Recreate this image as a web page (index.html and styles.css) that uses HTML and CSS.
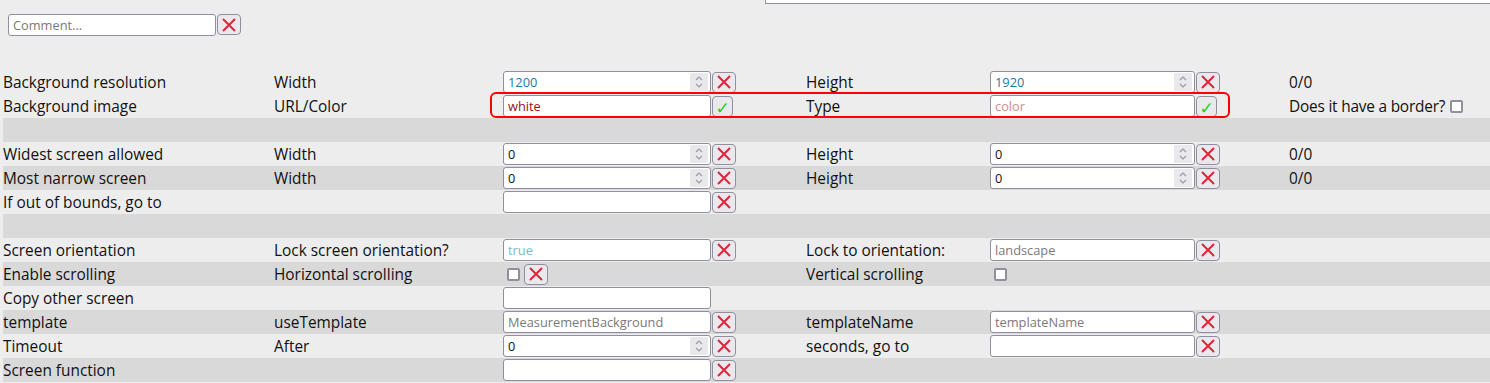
FILE: index.html
```html
<!DOCTYPE html>
<html lang="en">
<head>
    <meta charset="UTF-8">
    <title>Screen settings</title>
    <link rel="stylesheet" href="styles.css">
</head>
<body>
    <div class="notes"></div>

    <div class="comment-bar">
        <input type="text" class="field comment" placeholder="Comment...">
        <button class="btn-x"><svg viewBox="0 0 14 14"><path d="M1 1L13 13M13 1L1 13"/></svg></button>
    </div>

    <div class="settings">
        <div class="row light">
            <div>Background resolution</div>
            <div>Width</div>
            <div class="cell">
                <div class="field num"><input type="text" class="val-blue" value="1200"><span class="spin"><svg viewBox="0 0 10 14"><path d="M2 5L5 2L8 5M2 9L5 12L8 9"/></svg></span></div>
                <button class="btn-x"><svg viewBox="0 0 14 14"><path d="M1 1L13 13M13 1L1 13"/></svg></button>
            </div>
            <div>Height</div>
            <div class="cell">
                <div class="field num wide2"><input type="text" class="val-blue" value="1920"><span class="spin"><svg viewBox="0 0 10 14"><path d="M2 5L5 2L8 5M2 9L5 12L8 9"/></svg></span></div>
                <button class="btn-x"><svg viewBox="0 0 14 14"><path d="M1 1L13 13M13 1L1 13"/></svg></button>
            </div>
            <div>0/0</div>
        </div>

        <div class="row light">
            <div class="highlight"></div>
            <div>Background image</div>
            <div>URL/Color</div>
            <div class="cell">
                <input type="text" class="field val-red" value="white">
                <button class="btn-ok">✓</button>
            </div>
            <div>Type</div>
            <div class="cell">
                <input type="text" class="field wide2 ph-red" placeholder="color">
                <button class="btn-ok">✓</button>
            </div>
            <div class="cell border-q">Does it have a border?<span class="check"></span></div>
        </div>

        <div class="row dark"></div>

        <div class="row light">
            <div>Widest screen allowed</div>
            <div>Width</div>
            <div class="cell">
                <div class="field num"><input type="text" value="0"><span class="spin"><svg viewBox="0 0 10 14"><path d="M2 5L5 2L8 5M2 9L5 12L8 9"/></svg></span></div>
                <button class="btn-x"><svg viewBox="0 0 14 14"><path d="M1 1L13 13M13 1L1 13"/></svg></button>
            </div>
            <div>Height</div>
            <div class="cell">
                <div class="field num wide2"><input type="text" value="0"><span class="spin"><svg viewBox="0 0 10 14"><path d="M2 5L5 2L8 5M2 9L5 12L8 9"/></svg></span></div>
                <button class="btn-x"><svg viewBox="0 0 14 14"><path d="M1 1L13 13M13 1L1 13"/></svg></button>
            </div>
            <div>0/0</div>
        </div>

        <div class="row dark">
            <div>Most narrow screen</div>
            <div>Width</div>
            <div class="cell">
                <div class="field num"><input type="text" value="0"><span class="spin"><svg viewBox="0 0 10 14"><path d="M2 5L5 2L8 5M2 9L5 12L8 9"/></svg></span></div>
                <button class="btn-x"><svg viewBox="0 0 14 14"><path d="M1 1L13 13M13 1L1 13"/></svg></button>
            </div>
            <div>Height</div>
            <div class="cell">
                <div class="field num wide2"><input type="text" value="0"><span class="spin"><svg viewBox="0 0 10 14"><path d="M2 5L5 2L8 5M2 9L5 12L8 9"/></svg></span></div>
                <button class="btn-x"><svg viewBox="0 0 14 14"><path d="M1 1L13 13M13 1L1 13"/></svg></button>
            </div>
            <div>0/0</div>
        </div>

        <div class="row light">
            <div>If out of bounds, go to</div>
            <div></div>
            <div class="cell">
                <input type="text" class="field">
                <button class="btn-x"><svg viewBox="0 0 14 14"><path d="M1 1L13 13M13 1L1 13"/></svg></button>
            </div>
        </div>

        <div class="row dark"></div>

        <div class="row light">
            <div>Screen orientation</div>
            <div>Lock screen orientation?</div>
            <div class="cell">
                <input type="text" class="field ph-blue" placeholder="true">
                <button class="btn-x"><svg viewBox="0 0 14 14"><path d="M1 1L13 13M13 1L1 13"/></svg></button>
            </div>
            <div>Lock to orientation:</div>
            <div class="cell">
                <input type="text" class="field wide2" placeholder="landscape">
                <button class="btn-x"><svg viewBox="0 0 14 14"><path d="M1 1L13 13M13 1L1 13"/></svg></button>
            </div>
        </div>

        <div class="row dark">
            <div>Enable scrolling</div>
            <div>Horizontal scrolling</div>
            <div class="cell">
                <span class="check"></span>
                <button class="btn-x"><svg viewBox="0 0 14 14"><path d="M1 1L13 13M13 1L1 13"/></svg></button>
            </div>
            <div>Vertical scrolling</div>
            <div class="cell"><span class="check"></span></div>
        </div>

        <div class="row light">
            <div>Copy other screen</div>
            <div></div>
            <div class="cell"><input type="text" class="field"></div>
        </div>

        <div class="row dark">
            <div>template</div>
            <div>useTemplate</div>
            <div class="cell">
                <input type="text" class="field" placeholder="MeasurementBackground">
                <button class="btn-x"><svg viewBox="0 0 14 14"><path d="M1 1L13 13M13 1L1 13"/></svg></button>
            </div>
            <div>templateName</div>
            <div class="cell">
                <input type="text" class="field wide2" placeholder="templateName">
                <button class="btn-x"><svg viewBox="0 0 14 14"><path d="M1 1L13 13M13 1L1 13"/></svg></button>
            </div>
        </div>

        <div class="row light">
            <div>Timeout</div>
            <div>After</div>
            <div class="cell">
                <div class="field num"><input type="text" value="0"><span class="spin"><svg viewBox="0 0 10 14"><path d="M2 5L5 2L8 5M2 9L5 12L8 9"/></svg></span></div>
                <button class="btn-x"><svg viewBox="0 0 14 14"><path d="M1 1L13 13M13 1L1 13"/></svg></button>
            </div>
            <div>seconds, go to</div>
            <div class="cell">
                <input type="text" class="field wide2">
                <button class="btn-x"><svg viewBox="0 0 14 14"><path d="M1 1L13 13M13 1L1 13"/></svg></button>
            </div>
        </div>

        <div class="row dark">
            <div>Screen function</div>
            <div></div>
            <div class="cell">
                <input type="text" class="field">
                <button class="btn-x"><svg viewBox="0 0 14 14"><path d="M1 1L13 13M13 1L1 13"/></svg></button>
            </div>
        </div>
    </div>
</body>
</html>
```

FILE: styles.css
```css
body {
    margin: 0;
    background-color: #ededed;
    font-family: "Open Sans", "Noto Sans", sans-serif;
    font-size: 15.4px;
    color: #111;
    overflow: hidden;
}
/* leftover of the notes box above, scrolled out of view */
.notes {
    margin-left: 765px;
    height: 3px;
    border-left: 1px solid #8f8f9d;
    border-bottom: 1px solid #8f8f9d;
    background-color: #fff;
}
.comment-bar {
    display: flex;
    gap: 1px;
    margin: 10px 0 0 8px;
}
.settings {
    margin-top: 34px;
    margin-left: 3px;
}
.row {
    position: relative;
    display: grid;
    grid-template-columns: 271px 229px 303px 184px 299px 1fr;
    grid-template-rows: 24px;
    height: 24px;
    line-height: 25px;
    white-space: nowrap;
}
.light {
    background-color: #ededed;
}
.dark {
    background-color: #d9d9d9;
}
.cell {
    display: flex;
    align-items: center;
    gap: 1px;
    height: 24px;
}
.border-q {
    letter-spacing: -0.2px;
}
.field {
    box-sizing: border-box;
    width: 208px;
    height: 22px;
    border: 1px solid #8f8f9d;
    border-radius: 3px;
    background-color: #fff;
    font-family: "Open Sans", "Noto Sans", sans-serif;
    font-size: 12.8px;
    letter-spacing: 0;
    padding: 0 4px;
    color: #111;
    outline: none;
}
.field.wide2 {
    width: 205px;
}
.comment {
    width: 208px;
}
.field::placeholder {
    color: #7a7a7a;
}
.num {
    display: flex;
    align-items: center;
    padding: 0 2px 0 4px;
}
.num input {
    flex: 1;
    min-width: 0;
    border: none;
    padding: 0;
    background: transparent;
    font: inherit;
    color: #111;
    outline: none;
}
.spin {
    width: 18px;
    height: 18px;
    background-color: #e9e9ed;
    display: flex;
    align-items: center;
    justify-content: center;
}
.spin svg {
    width: 10px;
    height: 14px;
    fill: none;
    stroke: #9a9aa6;
    stroke-width: 1.2;
}
.val-blue {
    color: #1b7ba8 !important;
}
.val-red {
    color: #9b1111;
}
.ph-red::placeholder {
    color: #d58a8a;
}
.ph-blue::placeholder {
    color: #7ab8d2;
}
.btn-x, .btn-ok {
    box-sizing: border-box;
    width: 24px;
    height: 21px;
    padding: 0;
    border: 1px solid #8f8f9d;
    border-radius: 4px;
    background-color: #e9e9ed;
    display: flex;
    align-items: center;
    justify-content: center;
}
.btn-x svg {
    width: 14px;
    height: 14px;
    fill: none;
    stroke: #e0243c;
    stroke-width: 2;
}
.btn-ok {
    width: 21px;
    padding-top: 3px;
    color: #22d022;
    font-size: 17px;
    font-family: "DejaVu Sans", sans-serif;
}
.check {
    box-sizing: border-box;
    display: inline-block;
    width: 13px;
    height: 13px;
    margin: 0 3px 0 4px;
    border: 2px solid #8f8f9d;
    border-radius: 2px;
    background-color: #fff;
}
/* red frame drawn over the background image row */
.highlight {
    position: absolute;
    left: 487px;
    top: -2px;
    width: 740px;
    height: 26px;
    box-sizing: border-box;
    border: 2px solid #ff0000;
    border-radius: 6px;
    pointer-events: none;
}
```
